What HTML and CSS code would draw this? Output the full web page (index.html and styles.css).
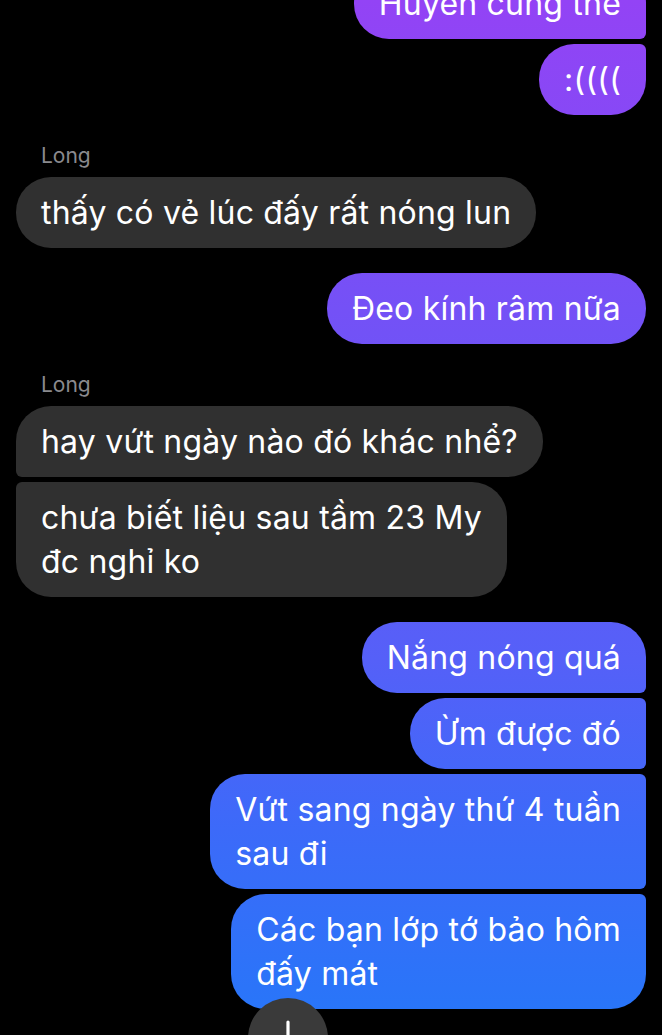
FILE: index.html
```html
<!DOCTYPE html>
<html lang="vi">
<head>
<meta charset="utf-8">
<title>Chat</title>
<link rel="stylesheet" href="styles.css">
</head>
<body>
<div class="chat">
  <div class="group right">
    <div class="msg out top">Huyền cũng thế</div>
    <div class="msg out bottom">:((((</div>
  </div>
  <div class="group left">
    <div class="name">Long</div>
    <div class="msg in">thấy có vẻ lúc đấy rất nóng lun</div>
  </div>
  <div class="group right">
    <div class="msg out">Đeo kính râm nữa</div>
  </div>
  <div class="group left">
    <div class="name">Long</div>
    <div class="msg in top">hay vứt ngày nào đó khác nhể?</div>
    <div class="msg in bottom">chưa biết liệu sau tầm 23 My<br>đc nghỉ ko</div>
  </div>
  <div class="group right">
    <div class="msg out top">Nắng nóng quá</div>
    <div class="msg out middle">Ừm được đó</div>
    <div class="msg out middle">Vứt sang ngày thứ 4 tuần<br>sau đi</div>
    <div class="msg out bottom">Các bạn lớp tớ bảo hôm<br>đấy mát</div>
  </div>
</div>
<div class="scroll-down">
  <svg width="80" height="80" viewBox="0 0 80 80" aria-hidden="true">
    <path d="M40 24 V54 M28 42 L40 54 L52 42" fill="none" stroke="#ffffff" stroke-width="3.2" stroke-linecap="round" stroke-linejoin="round"/>
  </svg>
</div>
</body>
</html>
```

FILE: styles.css
```css
html, body {
  margin: 0;
  padding: 0;
  height: 1035px;
  overflow: hidden;
  background: #000;
}

body {
  position: relative;
  font-family: Inter, "Noto Sans", "Liberation Sans", sans-serif;
}

.chat {
  display: flex;
  flex-direction: column;
  gap: 25px;
  padding: 0 16px;
  margin-top: -32px;
}

.group {
  display: flex;
  flex-direction: column;
  gap: 5px;
}

.group.right {
  align-items: flex-end;
}

.group.left {
  align-items: flex-start;
}

.name {
  font-size: 21px;
  line-height: 32px;
  color: #8a8a8e;
  padding-left: 25px;
}

.msg {
  font-size: 32px;
  line-height: 44px;
  letter-spacing: 0.2px;
  color: #fff;
  padding: 14px 25px 13px;
  border-radius: 35px;
  box-sizing: border-box;
  white-space: nowrap;
}

.msg.in {
  background: #303030;
}

.msg.out {
  background: linear-gradient(180deg, #9343f5 0px, #7451f6 310px, #5560f8 660px, #3c6af9 830px, #2677f9 1035px);
  background-attachment: fixed;
}

.left .msg.top { border-bottom-left-radius: 6px; }
.left .msg.bottom { border-top-left-radius: 6px; }
.left .msg.middle { border-top-left-radius: 6px; border-bottom-left-radius: 6px; }

.right .msg.top { border-bottom-right-radius: 6px; }
.right .msg.bottom { border-top-right-radius: 6px; }
.right .msg.middle { border-top-right-radius: 6px; border-bottom-right-radius: 6px; }

.scroll-down {
  position: absolute;
  left: 248px;
  top: 998px;
  width: 80px;
  height: 80px;
  border-radius: 50%;
  background: #3a3a3a;
  display: flex;
  align-items: center;
  justify-content: center;
}

.scroll-down svg {
  display: block;
}
```
